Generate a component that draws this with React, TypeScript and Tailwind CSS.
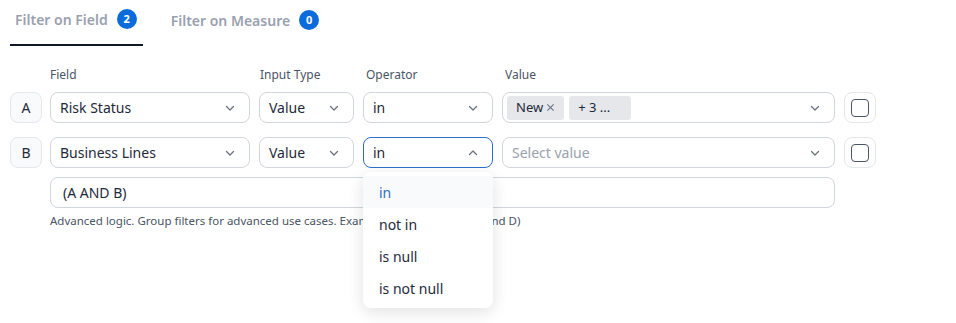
import React from "react";

const Chevron = ({ up = false }: { up?: boolean }) => (
  <svg width="12" height="12" viewBox="0 0 12 12" fill="none" className="text-gray-500">
    <path d={up ? "M2.5 7.5L6 4L9.5 7.5" : "M2.5 4.5L6 8L9.5 4.5"} stroke="currentColor" strokeWidth="1.3" strokeLinecap="round" strokeLinejoin="round" />
  </svg>
);

const Select = ({ w, text, open = false, placeholder = false }: { w: string; text: string; open?: boolean; placeholder?: boolean }) => (
  <div
    className={`${w} h-[31px] rounded-lg border bg-white flex items-center justify-between pl-[9px] pr-[13px] ${open ? "border-[#2d6fcf]" : "border-gray-300"}`}
  >
    <span className={`text-[14px] ${placeholder ? "text-gray-400" : "text-gray-800"}`}>{text}</span>
    <Chevron up={open} />
  </div>
);

const Letter = ({ l }: { l: string }) => (
  <div className="w-[32px] h-[31px] rounded-lg border border-gray-200 bg-gray-50 flex items-center justify-center text-[14px] text-gray-800">
    {l}
  </div>
);

const Check = () => (
  <div className="ml-[9px] w-[32px] h-[31px] rounded-lg border border-gray-200 bg-white flex items-center justify-center">
    <div className="w-[18px] h-[18px] rounded-[4px] border-[1.5px] border-gray-600" />
  </div>
);

const Badge = ({ n }: { n: string }) => (
  <span className="ml-[9px] w-[20px] h-[20px] rounded-full bg-[#0b6bdc] text-white text-[11px] font-bold flex items-center justify-center">
    {n}
  </span>
);

export default function App() {
  return (
    <div className="w-[956px] h-[323px] bg-white relative" style={{ fontFamily: '"Noto Sans", "Open Sans", sans-serif' }}>
      <div className="flex px-[10px]">
        <div className="h-[46px] pl-[5px] pr-[6px] flex items-center border-b-2 border-gray-900 pb-[6px]">
          <span className="text-[14px] font-semibold text-gray-400">Filter on Field</span>
          <Badge n="2" />
        </div>
        <div className="h-[46px] ml-[28px] flex items-center pb-[6px]">
          <span className="text-[14px] font-semibold text-gray-400">Filter on Measure</span>
          <Badge n="0" />
        </div>
      </div>

      <div className="px-[10px] pt-[20px]">
        <div className="flex text-[12px] text-gray-600 h-[18px] items-center">
          <div className="w-[40px]" />
          <div className="w-[209px]">Field</div>
          <div className="w-[104px] pl-[1px]">Input Type</div>
          <div className="w-[139px] pl-[3px]">Operator</div>
          <div className="pl-[3px]">Value</div>
        </div>

        <div className="flex items-center mt-[8px]">
          <Letter l="A" />
          <div className="ml-[8px]"><Select w="w-[200px]" text="Risk Status" /></div>
          <div className="ml-[9px]"><Select w="w-[95px]" text="Value" /></div>
          <div className="ml-[9px]"><Select w="w-[130px]" text="in" /></div>
          <div className="ml-[9px] w-[333px] h-[31px] rounded-lg border border-gray-300 flex items-center justify-between pl-[4px] pr-[13px]">
            <div className="flex gap-[5px]">
              <span className="h-[24px] px-[9px] bg-gray-200 rounded-[3px] text-[13px] text-gray-800 flex items-center gap-[3px]">
                New
                <svg width="9" height="9" viewBox="0 0 10 10" className="text-gray-500">
                  <path d="M1.5 1.5L8.5 8.5M8.5 1.5L1.5 8.5" stroke="currentColor" strokeWidth="1.2" />
                </svg>
              </span>
              <span className="h-[24px] w-[62px] pl-[9px] bg-gray-200 rounded-[3px] text-[13px] text-gray-800 flex items-center">+ 3 ...</span>
            </div>
            <Chevron />
          </div>
          <Check />
        </div>

        <div className="flex items-center mt-[14px]">
          <Letter l="B" />
          <div className="ml-[8px]"><Select w="w-[200px]" text="Business Lines" /></div>
          <div className="ml-[9px]"><Select w="w-[95px]" text="Value" /></div>
          <div className="ml-[9px] relative">
            <Select w="w-[130px]" text="in" open />
            <div className="absolute left-0 top-[35px] w-[130px] rounded-lg bg-white shadow-[0_4px_16px_rgba(0,0,0,0.12)] py-[4px] z-10">
              <div className="h-[32px] px-[16px] flex items-center bg-gray-50 text-[14px] text-[#2d6fcf]">in</div>
              <div className="h-[32px] px-[16px] flex items-center text-[14px] text-gray-800">not in</div>
              <div className="h-[32px] px-[16px] flex items-center text-[14px] text-gray-800">is null</div>
              <div className="h-[32px] px-[16px] flex items-center text-[14px] text-gray-800">is not null</div>
            </div>
          </div>
          <div className="ml-[9px]"><Select w="w-[333px]" text="Select value" placeholder /></div>
          <Check />
        </div>

        <div className="ml-[40px] mt-[9px] w-[785px] h-[31px] rounded-lg border border-gray-300 flex items-center pl-[12px] text-[14px] text-gray-800">
          (A AND B)
        </div>
        <div className="ml-[40px] mt-[4px] text-[11.5px] text-gray-600">
          Advanced logic. Group filters for advanced use cases. Example: (A or B) and (A, C and D)
        </div>
      </div>
    </div>
  );
}
